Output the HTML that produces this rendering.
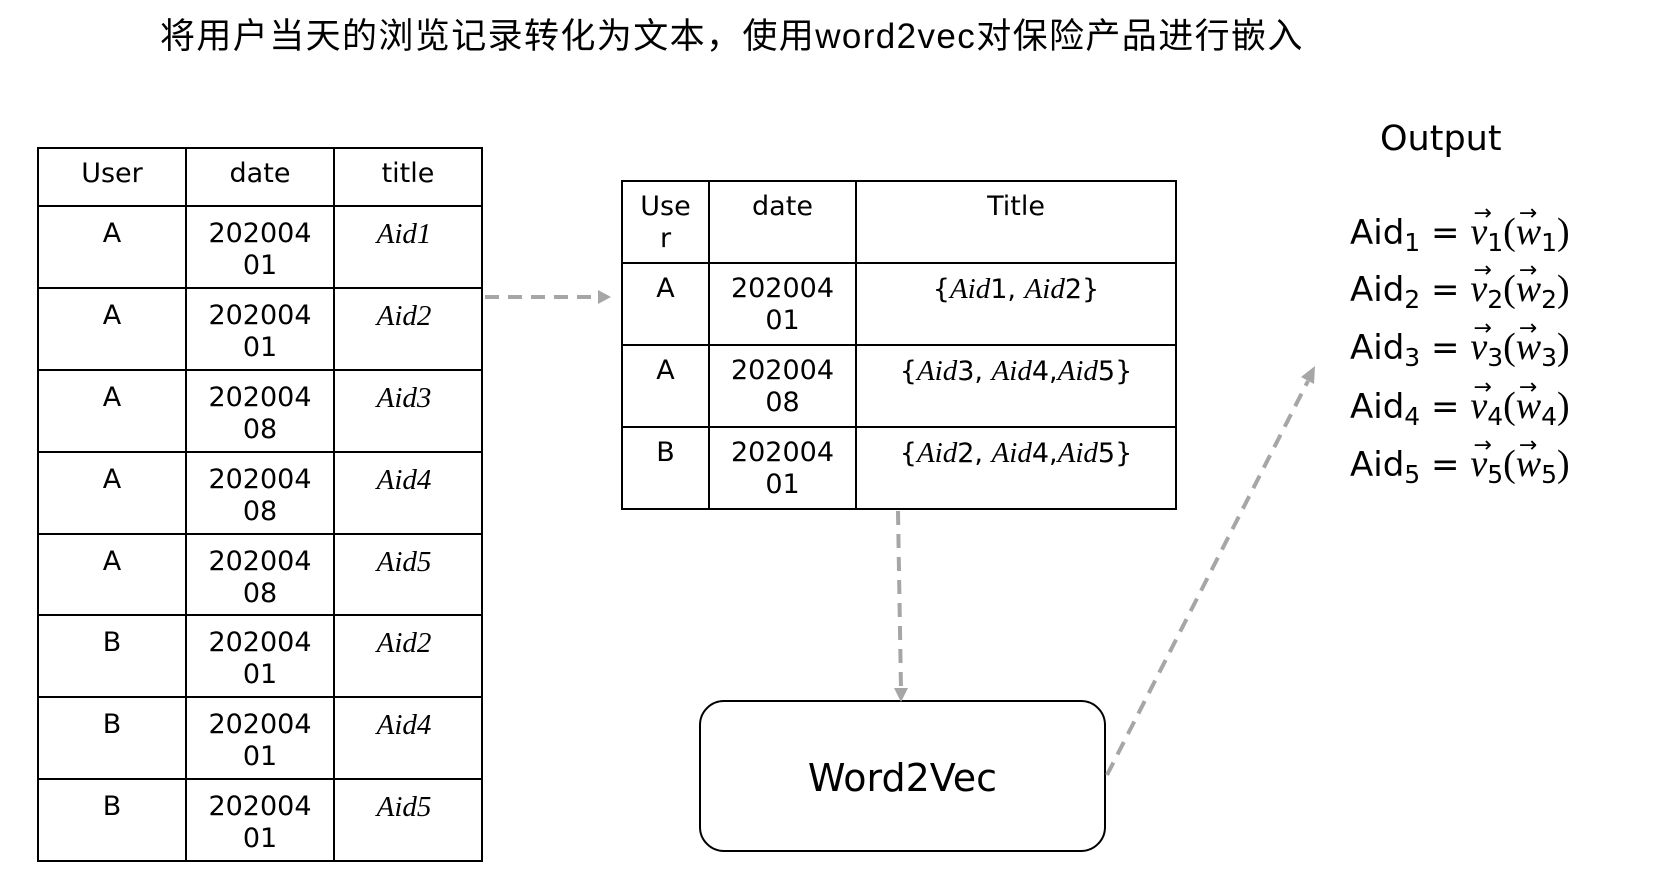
<!DOCTYPE html>
<html><head><meta charset="utf-8"><style>
body{margin:0;width:1666px;height:887px;background:#fff;position:relative;overflow:hidden;font-family:"DejaVu Sans","Liberation Sans",sans-serif;color:#000}
.a{position:absolute}
.t{position:absolute;font-size:27px;line-height:32px;text-align:center}
.m{font-family:"Liberation Serif",serif;font-style:italic;font-size:29px}
.eq{position:absolute;left:1350px;font-size:34px;white-space:nowrap;line-height:40px}
.eq sub{font-size:25px;vertical-align:-7px;font-family:"DejaVu Sans",sans-serif}
.v{font-family:"Liberation Serif",serif;font-style:italic;position:relative;display:inline-block;font-size:38px}
.v b{position:absolute;left:3px;top:-18px;font-weight:normal;font-style:normal;font-size:22px;font-family:"DejaVu Sans",sans-serif}
.p{font-family:"Liberation Serif",serif;font-size:38px}
</style></head><body>
<div class="a" style="left:160px;top:16px;font-size:35px;line-height:42px;letter-spacing:1.4px;font-family:'Liberation Sans','Noto Sans CJK SC',sans-serif;white-space:nowrap">将用户当天的浏览记录转化为文本，使用word2vec对保险产品进行嵌入</div>

<svg class="a" style="left:0;top:0" width="1666" height="887">
<g fill="none" stroke="#000" stroke-width="2">
<rect x="38" y="148" width="444" height="713"/>
<line x1="186" y1="148" x2="186" y2="861"/><line x1="334" y1="148" x2="334" y2="861"/>
<line x1="38" y1="206" x2="482" y2="206"/><line x1="38" y1="288" x2="482" y2="288"/>
<line x1="38" y1="370" x2="482" y2="370"/><line x1="38" y1="452" x2="482" y2="452"/>
<line x1="38" y1="534" x2="482" y2="534"/><line x1="38" y1="615" x2="482" y2="615"/>
<line x1="38" y1="697" x2="482" y2="697"/><line x1="38" y1="779" x2="482" y2="779"/>
<rect x="622" y="181" width="554" height="328"/>
<line x1="709" y1="181" x2="709" y2="509"/><line x1="856" y1="181" x2="856" y2="509"/>
<line x1="622" y1="263" x2="1176" y2="263"/><line x1="622" y1="345" x2="1176" y2="345"/><line x1="622" y1="427" x2="1176" y2="427"/>
<rect x="700" y="701" width="405" height="150" rx="24"/>
</g>
<g stroke="#a6a6a6" stroke-width="4" stroke-dasharray="14,9" fill="none">
<line x1="485" y1="297" x2="600" y2="297"/>
<line x1="898" y1="511" x2="901" y2="690"/>
<line x1="1107" y1="775" x2="1308" y2="381"/>
</g>
<g fill="#a6a6a6">
<polygon points="611,297 598,290 598,304"/>
<polygon points="901,702 894,688 908,688"/>
<polygon points="1315,366 1301,377 1314,384"/>
</g>
</svg>

<div class="t" style="left:38px;top:158px;width:148px">User</div>
<div class="t" style="left:186px;top:158px;width:148px">date</div>
<div class="t" style="left:334px;top:158px;width:148px">title</div>

<div class="t" style="left:38px;top:218px;width:148px">A</div><div class="t" style="left:186px;top:218px;width:148px">202004<br>01</div><div class="t m" style="left:330px;top:218px;width:148px">Aid1</div>
<div class="t" style="left:38px;top:300px;width:148px">A</div><div class="t" style="left:186px;top:300px;width:148px">202004<br>01</div><div class="t m" style="left:330px;top:300px;width:148px">Aid2</div>
<div class="t" style="left:38px;top:382px;width:148px">A</div><div class="t" style="left:186px;top:382px;width:148px">202004<br>08</div><div class="t m" style="left:330px;top:382px;width:148px">Aid3</div>
<div class="t" style="left:38px;top:464px;width:148px">A</div><div class="t" style="left:186px;top:464px;width:148px">202004<br>08</div><div class="t m" style="left:330px;top:464px;width:148px">Aid4</div>
<div class="t" style="left:38px;top:546px;width:148px">A</div><div class="t" style="left:186px;top:546px;width:148px">202004<br>08</div><div class="t m" style="left:330px;top:546px;width:148px">Aid5</div>
<div class="t" style="left:38px;top:627px;width:148px">B</div><div class="t" style="left:186px;top:627px;width:148px">202004<br>01</div><div class="t m" style="left:330px;top:627px;width:148px">Aid2</div>
<div class="t" style="left:38px;top:709px;width:148px">B</div><div class="t" style="left:186px;top:709px;width:148px">202004<br>01</div><div class="t m" style="left:330px;top:709px;width:148px">Aid4</div>
<div class="t" style="left:38px;top:791px;width:148px">B</div><div class="t" style="left:186px;top:791px;width:148px">202004<br>01</div><div class="t m" style="left:330px;top:791px;width:148px">Aid5</div>

<div class="t" style="left:622px;top:191px;width:87px">Use<br>r</div>
<div class="t" style="left:709px;top:191px;width:147px">date</div>
<div class="t" style="left:856px;top:191px;width:320px">Title</div>
<div class="t" style="left:622px;top:273px;width:87px">A</div><div class="t" style="left:709px;top:273px;width:147px">202004<br>01</div><div class="t" style="left:856px;top:273px;width:320px">{<span class="m">Aid</span>1, <span class="m">Aid</span>2}</div>
<div class="t" style="left:622px;top:355px;width:87px">A</div><div class="t" style="left:709px;top:355px;width:147px">202004<br>08</div><div class="t" style="left:856px;top:355px;width:320px">{<span class="m">Aid</span>3, <span class="m">Aid</span>4,<span class="m">Aid</span>5}</div>
<div class="t" style="left:622px;top:437px;width:87px">B</div><div class="t" style="left:709px;top:437px;width:147px">202004<br>01</div><div class="t" style="left:856px;top:437px;width:320px">{<span class="m">Aid</span>2, <span class="m">Aid</span>4,<span class="m">Aid</span>5}</div>

<div class="a" style="left:700px;top:756px;width:405px;text-align:center;font-size:38px;line-height:44px">Word2Vec</div>

<div class="a" style="left:1380px;top:119px;font-size:35px;line-height:40px">Output</div>

<div class="eq" style="top:212px">Aid<sub>1</sub> = <span class="v"><b>→</b>v</span><sub>1</sub><span class="p">(</span><span class="v"><b>→</b>w</span><sub>1</sub><span class="p">)</span></div>
<div class="eq" style="top:269px">Aid<sub>2</sub> = <span class="v"><b>→</b>v</span><sub>2</sub><span class="p">(</span><span class="v"><b>→</b>w</span><sub>2</sub><span class="p">)</span></div>
<div class="eq" style="top:327px">Aid<sub>3</sub> = <span class="v"><b>→</b>v</span><sub>3</sub><span class="p">(</span><span class="v"><b>→</b>w</span><sub>3</sub><span class="p">)</span></div>
<div class="eq" style="top:386px">Aid<sub>4</sub> = <span class="v"><b>→</b>v</span><sub>4</sub><span class="p">(</span><span class="v"><b>→</b>w</span><sub>4</sub><span class="p">)</span></div>
<div class="eq" style="top:444px">Aid<sub>5</sub> = <span class="v"><b>→</b>v</span><sub>5</sub><span class="p">(</span><span class="v"><b>→</b>w</span><sub>5</sub><span class="p">)</span></div>
</body></html>
